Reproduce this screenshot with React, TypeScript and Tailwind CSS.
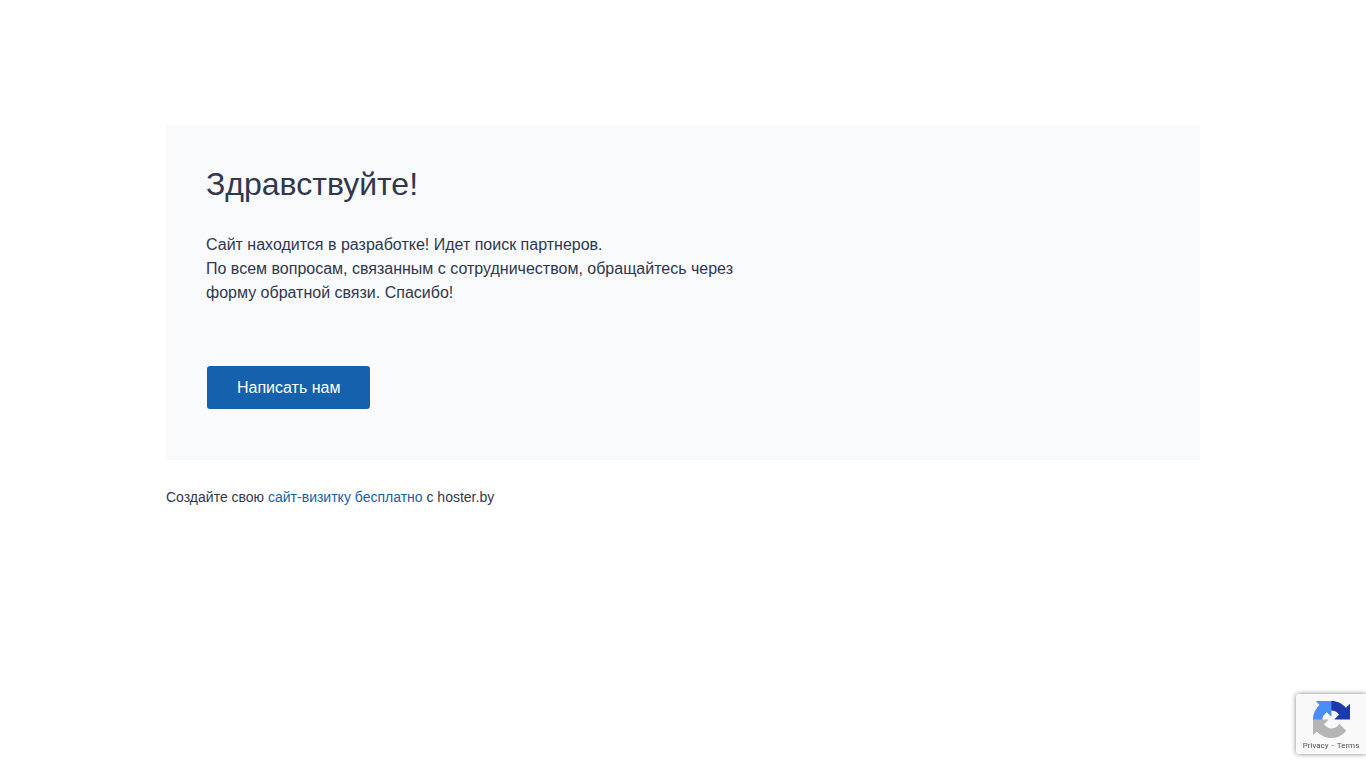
function RecaptchaLogo() {
  return (
    <svg viewBox="0 0 64 64" className="w-[37px] h-[37px]" aria-hidden="true">
      <path
        fill="#1c3aa9"
        d="M64 31.955l-.033-1.37V4.687l-7.16 7.16C50.948 4.674 42.033.093 32.05.093c-10.4 0-19.622 4.96-25.458 12.64l11.736 11.86a15.55 15.55 0 0 1 4.754-5.334c2.05-1.6 4.952-2.906 8.968-2.906.485 0 .86.057 1.135.163 4.976.393 9.288 3.14 11.828 7.124l-8.307 8.307L64 31.953"
      />
      <path
        fill="#4b8df8"
        d="M31.862.094l-1.37.033H4.594l7.16 7.16C4.58 13.147 0 22.06 0 32.046c0 10.4 4.96 19.622 12.64 25.458L24.5 45.768a15.55 15.55 0 0 1-5.334-4.754c-1.6-2.05-2.906-4.952-2.906-8.968 0-.485.057-.86.163-1.135.393-4.976 3.14-9.288 7.124-11.828l8.307 8.307L31.86.095"
      />
      <path
        fill="#b5b5b5"
        d="M.001 32.045l.033 1.37v25.898l7.16-7.16c5.86 7.173 14.774 11.754 24.76 11.754 10.4 0 19.622-4.96 25.458-12.64l-11.736-11.86a15.55 15.55 0 0 1-4.754 5.334c-2.05 1.6-4.952 2.906-8.968 2.906-.485 0-.86-.057-1.135-.163-4.976-.393-9.288-3.14-11.828-7.124l8.307-8.307c-10.522.04-22.4.066-27.295-.005"
      />
    </svg>
  );
}

function RecaptchaBadge() {
  return (
    <aside className="fixed right-0 bottom-[14px] w-[70px] h-[60px] pt-[7px] flex flex-col items-center rounded-l-xs bg-[#f9f9f9] shadow-[0_0_5px_gray]">
      <RecaptchaLogo />
      <div className="flex gap-[3px] font-['Roboto',sans-serif] text-[8px] leading-4 text-[#555]">
        <a href="#privacy">Privacy</a>
        <span>-</span>
        <a href="#terms">Terms</a>
      </div>
    </aside>
  );
}

export default function App() {
  return (
    <div className="px-4 pt-[125px] font-['Liberation_Sans',Arial,sans-serif] text-[#30374f]">
      <main className="max-w-[1034px] mx-auto">
        <section className="bg-[#f9fafc] px-10 pt-10 pb-[51px]">
          <h1 className="text-[32px] leading-[38px]">Здравствуйте!</h1>

          <p className="mt-[30px] max-w-[560px] text-base leading-6">
            Сайт находится в разработке! Идет поиск партнеров.
            <br />
            По всем вопросам, связанным с сотрудничеством, обращайтесь через
            форму обратной связи. Спасибо!
          </p>

          <button
            type="button"
            className="mt-[61px] ml-px block px-[30px] h-[43px] rounded-[3px] bg-[#1561ae] text-base text-white cursor-pointer hover:bg-[#11518f]"
          >
            Написать нам
          </button>
        </section>

        <footer className="mt-[27px] text-sm">
          Создайте свою{" "}
          <a href="#create" className="text-[#1561ae] hover:underline">
            сайт-визитку бесплатно
          </a>{" "}
          с hoster.by
        </footer>
      </main>

      <RecaptchaBadge />
    </div>
  );
}
